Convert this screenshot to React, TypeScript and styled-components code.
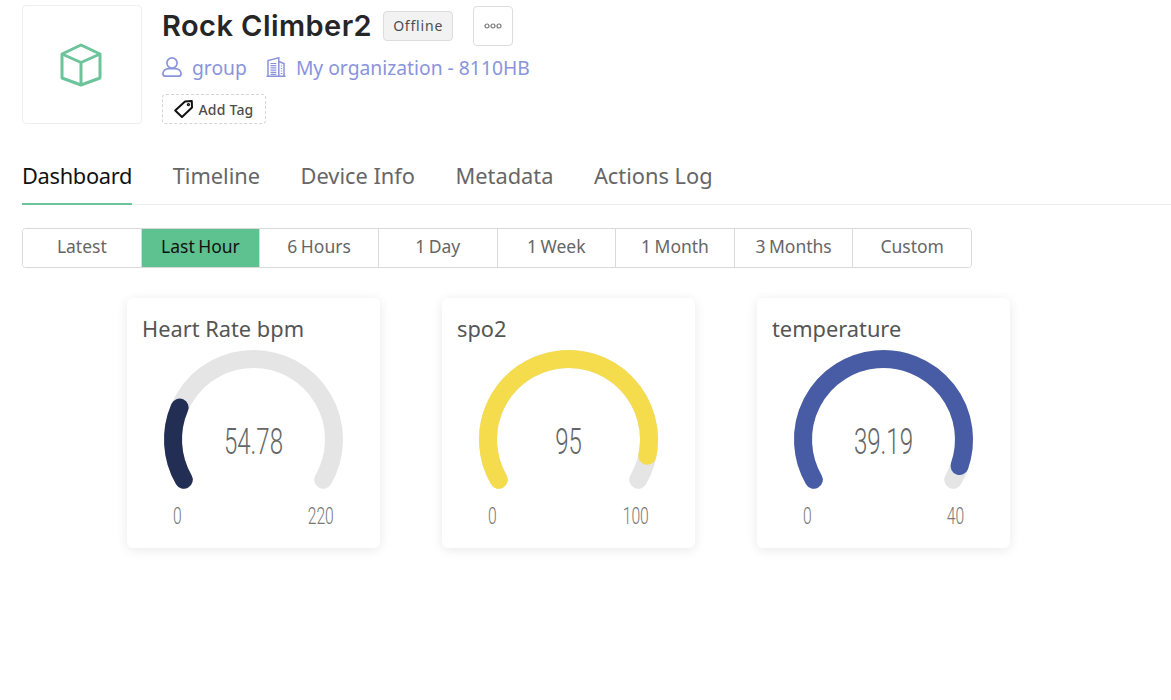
import React from "react";
import styled, { createGlobalStyle } from "styled-components";

const Global = createGlobalStyle`
  html, body { margin: 0; padding: 0; background: #fff; }
  body { font-family: "Noto Sans", "Open Sans", sans-serif; }
`;

const Page = styled.div`
  width: 1171px;
  height: 700px;
  overflow: hidden;
  padding: 5px 0 0 22px;
  box-sizing: border-box;
`;
const Header = styled.header`
  display: flex;
  gap: 20px;
  height: 120px;
`;
const LogoBox = styled.div`
  width: 120px;
  height: 119px;
  box-sizing: border-box;
  border: 1px solid #eeeeee;
  border-radius: 4px;
  display: flex;
  align-items: center;
  justify-content: center;
`;
const HeaderInfo = styled.div`
  display: flex;
  flex-direction: column;
`;
const TitleRow = styled.div`
  display: flex;
  align-items: center;
  height: 41px;
`;
const Title = styled.h1`
  margin: 0;
  font: 600 29px/41px "Inter", sans-serif;
  letter-spacing: 0.44px;
  color: #262626;
`;
const StatusBadge = styled.span`
  margin-left: 11px;
  width: 70px;
  height: 30px;
  box-sizing: border-box;
  border: 1px solid #dddddd;
  border-radius: 4px;
  background: #f2f2f2;
  color: #4d4d4d;
  font-size: 14px;
  letter-spacing: 0.8px;
  display: flex;
  align-items: center;
  justify-content: center;
`;
const MoreButton = styled.button`
  margin-left: 20px;
  width: 40px;
  height: 40px;
  padding: 0;
  border: 1px solid #dddddd;
  border-radius: 4px;
  background: #fff;
  display: flex;
  align-items: center;
  justify-content: center;
`;
const MetaRow = styled.div`
  display: flex;
  align-items: center;
  height: 30px;
  margin-top: 6px;
  color: #8a94dc;
  font-size: 19.3px;
`;
const MetaItem = styled.span`
  display: flex;
  align-items: center;
  gap: 10px;
  margin-right: 19px;
`;
const TagButton = styled.button`
  margin-top: 12px;
  width: 104px;
  height: 30px;
  padding: 0;
  box-sizing: border-box;
  border: 1px dashed #d5d5d5;
  border-radius: 4px;
  background: #fff;
  color: #4d4d4d;
  font: 500 14px "Noto Sans", sans-serif;
  letter-spacing: 0.2px;
  display: flex;
  align-items: center;
  justify-content: center;
  gap: 5px;
`;
const Tabs = styled.nav`
  display: flex;
  align-items: flex-start;
  gap: 40.5px;
  height: 49px;
  margin-top: 30px;
  border-bottom: 1px solid #eeeeee;
  box-sizing: content-box;
`;
const Tab = styled.div<{ $active?: boolean }>`
  height: 50px;
  box-sizing: border-box;
  line-height: 41px;
  font-size: 21.8px;
  letter-spacing: ${(p) => (p.$active ? "-0.3px" : "0")};
  color: ${(p) => (p.$active ? "#111" : "#666")};
  border-bottom: 2px solid ${(p) => (p.$active ? "#6cc49b" : "transparent")};
`;
const Segments = styled.div`
  display: flex;
  width: 950px;
  height: 40px;
  margin-top: 23px;
  box-sizing: border-box;
  border: 1px solid #d9d9d9;
  border-radius: 4px;
  overflow: hidden;
`;
const Segment = styled.div<{ $active?: boolean }>`
  flex: 1;
  display: flex;
  align-items: center;
  justify-content: center;
  padding-bottom: 5px;
  font-size: 17.5px;
  word-spacing: -1px;
  color: ${(p) => (p.$active ? "#111" : "#666")};
  background: ${(p) => (p.$active ? "#5dc190" : "#fff")};
  & + & { border-left: 1px solid #d9d9d9; }
`;
const Cards = styled.section`
  display: flex;
  gap: 62px;
  margin: 30px 0 0 105px;
`;
const Card = styled.article`
  width: 253px;
  height: 250px;
  box-sizing: border-box;
  padding: 17px 15px 0;
  border-radius: 6px;
  background: #fff;
  box-shadow: 0 2px 12px rgba(0, 0, 0, 0.09);
`;
const CardTitle = styled.h2`
  margin: 0;
  font: 400 21.8px/28px "Noto Sans", sans-serif;
  color: #555;
`;
const GaugeBox = styled.div`
  position: relative;
  height: 150px;
  margin-top: 5px;
`;
const GaugeSvg = styled.svg`
  display: block;
`;
const GaugeValue = styled.span`
  position: absolute;
  left: 0;
  right: 0;
  top: 74px;
  text-align: center;
  font: 300 37px/40px "Roboto", sans-serif;
  color: #666;
  transform: scaleX(0.65);
`;
const Limits = styled.div`
  display: flex;
  justify-content: space-between;
  margin: 4px 31px 0 31px;
`;
const Limit = styled.span<{ $end?: boolean }>`
  font: 300 24.5px/28px "Roboto", sans-serif;
  color: #777;
  transform: scaleX(0.64);
  transform-origin: ${(p) => (p.$end ? "right" : "left")} center;
`;

const CX = 111.5;
const CY = 66.5;
const R = 80.5;

function point(deg: number) {
  const a = (deg * Math.PI) / 180;
  return `${(CX + R * Math.cos(a)).toFixed(2)} ${(CY - R * Math.sin(a)).toFixed(2)}`;
}
function arc(from: number, to: number) {
  const large = from - to > 180 ? 1 : 0;
  return `M${point(from)}A${R} ${R} 0 ${large} 1 ${point(to)}`;
}

type GaugeData = { title: string; value: string; max: string; color: string; end: number };

const gauges: GaugeData[] = [
  { title: "Heart Rate bpm", value: "54.78", max: "220", color: "#232e54", end: 156.6 },
  { title: "spo2", value: "95", max: "100", color: "#f5dc4d", end: -11.7 },
  { title: "temperature", value: "39.19", max: "40", color: "#485ba5", end: -19.2 },
];

function Gauge({ title, value, max, color, end }: GaugeData) {
  return (
    <Card>
      <CardTitle>{title}</CardTitle>
      <GaugeBox>
        <GaugeSvg width="223" height="150" viewBox="0 -25 223 150" fill="none" strokeWidth="18" strokeLinecap="round">
          <path d={arc(210, -30)} stroke="#e5e5e5" />
          <path d={arc(210, end)} stroke={color} />
        </GaugeSvg>
        <GaugeValue>{value}</GaugeValue>
      </GaugeBox>
      <Limits>
        <Limit>0</Limit>
        <Limit $end>{max}</Limit>
      </Limits>
    </Card>
  );
}

export default function App() {
  return (
    <Page>
      <Global />
      <Header>
        <LogoBox>
          <svg width="44" height="44" viewBox="0 0 44 44" fill="none" stroke="#6cc49b" strokeWidth="3" strokeLinejoin="round">
            <path d="M21 2 40 11V35L21 42 2 35V11Z" />
            <path d="M2 11 21 19.5 40 11M21 19.5V42" />
          </svg>
        </LogoBox>
        <HeaderInfo>
          <TitleRow>
            <Title>Rock Climber2</Title>
            <StatusBadge>Offline</StatusBadge>
            <MoreButton aria-label="More">
              <svg width="18" height="6" viewBox="0 0 18 6" fill="none" stroke="#777" strokeWidth="1.2">
                <circle cx="3" cy="3" r="2" />
                <circle cx="9" cy="3" r="2" />
                <circle cx="15" cy="3" r="2" />
              </svg>
            </MoreButton>
          </TitleRow>
          <MetaRow>
            <MetaItem>
              <svg width="20" height="20" viewBox="0 0 20 20" fill="none" stroke="#8a94dc" strokeWidth="1.7">
                <circle cx="10" cy="6" r="5.1" />
                <path d="M.9 16.5C.9 13.8 3.5 11.6 6.5 11.6H13.5C16.5 11.6 19.1 13.8 19.1 16.5 19.1 18.4 18 19.2 16.5 19.2H3.5C2 19.2.9 18.4.9 16.5Z" />
              </svg>
              group
            </MetaItem>
            <MetaItem>
              <svg width="20" height="20" viewBox="0 0 20 20" fill="none" stroke="#8a94dc" strokeWidth="1.5">
                <path d="M.5 19.3H19.5M2 19.3V3.5L12.8.8V19.3M12.8 4.5 18 6.5V19.3" />
                <path d="M4.5 6.5H10.3M4.5 8.7H10.3M4.5 10.9H10.3M4.5 13.1H10.3M4.5 15.3H10.3M4.5 17.3H10.3M14.8 9H16.2M14.8 11.5H16.2M14.8 14H16.2M14.8 16.5H16.2" strokeWidth="1.2" />
              </svg>
              My organization - 8110HB
            </MetaItem>
          </MetaRow>
          <TagButton>
            <svg width="19" height="18" viewBox="0 0 19 18" fill="none" stroke="#111" strokeWidth="2" strokeLinejoin="round">
              <path d="M11 1.5 17.8 1 18 7.5 8 17 1.2 10.5Z" />
              <circle cx="14.4" cy="4.6" r="1" strokeWidth="1.4" />
            </svg>
            Add Tag
          </TagButton>
        </HeaderInfo>
      </Header>
      <Tabs>
        <Tab $active>Dashboard</Tab>
        <Tab>Timeline</Tab>
        <Tab>Device Info</Tab>
        <Tab>Metadata</Tab>
        <Tab>Actions Log</Tab>
      </Tabs>
      <Segments>
        <Segment>Latest</Segment>
        <Segment $active>Last Hour</Segment>
        <Segment>6 Hours</Segment>
        <Segment>1 Day</Segment>
        <Segment>1 Week</Segment>
        <Segment>1 Month</Segment>
        <Segment>3 Months</Segment>
        <Segment>Custom</Segment>
      </Segments>
      <Cards>
        {gauges.map((g) => (
          <Gauge key={g.title} {...g} />
        ))}
      </Cards>
    </Page>
  );
}
